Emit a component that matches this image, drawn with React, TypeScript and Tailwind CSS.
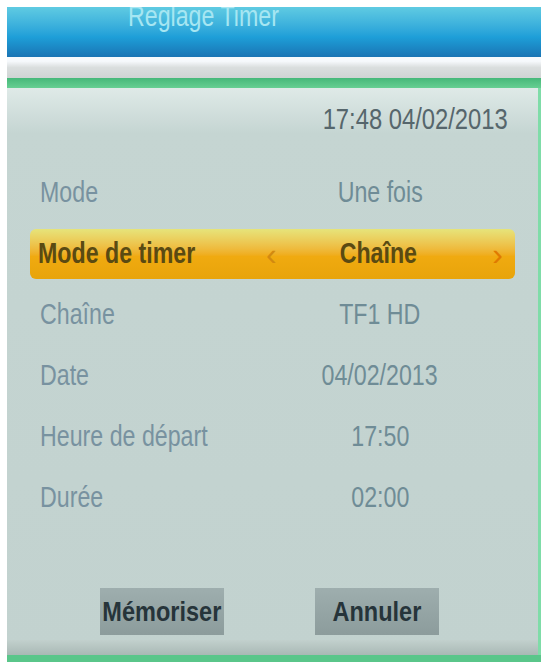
import React from 'react';

const font = "font-['Liberation_Sans',Arial,sans-serif]";

interface RowProps {
  label: string;
  value: string;
}

// the box font is a narrow one, so text is squeezed horizontally
const Row: React.FC<RowProps> = ({ label, value }) => (
  <div className="flex h-[50px] items-center pl-[33px]">
    <span className="w-[250px] whitespace-nowrap text-[29px] text-[#7892a0]">
      <span className="inline-block origin-left scale-x-[0.8]">{label}</span>
    </span>
    <span className="w-[180px] whitespace-nowrap text-center text-[29px] text-[#6f8c96]">
      <span className="inline-block scale-x-[0.8]">{value}</span>
    </span>
  </div>
);

export default function App() {
  return (
    <div className={`flex h-[662px] w-[546px] flex-col bg-white pl-[7px] pr-[5px] pt-[7px] ${font}`}>
      {/* title bar */}
      <div className="h-[50px] overflow-hidden bg-gradient-to-b from-[#5fcbe2] via-[#1e9fd8] via-60% to-[#1a74b4]">
        <div className="-mt-[11px] whitespace-nowrap pl-[121px] text-[29px] leading-[40px] text-[#a6e6f2]">
          <span className="inline-block origin-left scale-x-[0.8]">Reglage Timer</span>
        </div>
      </div>
      <div className="h-[21px] bg-gradient-to-b from-[#f6f9fc] from-20% via-[#dadede] to-[#cfd4d3]" />
      <div className="h-[10px] bg-gradient-to-b from-[#46b879] to-[#66cf92]" />

      {/* panel */}
      <div className="flex flex-1 flex-col border-r-[3px] border-[#7fdca8] bg-gradient-to-b from-[#dfeae8] via-[#c5d5d2] via-[8%] to-[#c2d2cf]">
        <div className="flex h-[64px] items-center justify-end whitespace-nowrap pr-[30px] text-[29px] text-[#56666c]">
          <span className="inline-block origin-right scale-x-[0.82]">17:48 04/02/2013</span>
        </div>

        <div className="mt-[16px] flex flex-col gap-[11px]">
          <Row label="Mode" value="Une fois" />

          <div className="mx-[23px] flex h-[50px] items-center rounded-[6px] bg-gradient-to-b from-[#e6e47a] via-[#f0aa10] via-55% to-[#e8a40a] pl-[8px] pr-[12px] font-bold text-[#5a4a12]">
            <span className="w-[228px] whitespace-nowrap text-[29px]">
              <span className="inline-block origin-left scale-x-[0.8]">Mode de timer</span>
            </span>
            <span className="w-[30px] text-[32px] font-normal text-[#d28a10]">‹</span>
            <span className="flex-1 whitespace-nowrap pr-[22px] text-center text-[29px]">
              <span className="inline-block scale-x-[0.8]">Chaîne</span>
            </span>
            <span className="w-[20px] text-right text-[32px] font-normal text-[#e07a00]">›</span>
          </div>

          <Row label="Chaîne" value="TF1 HD" />
          <Row label="Date" value="04/02/2013" />
          <Row label="Heure de départ" value="17:50" />
          <Row label="Durée" value="02:00" />
        </div>

        <div className="mt-auto flex gap-[91px] pb-[5px] pl-[93px]">
          <div className="flex h-[47px] w-[124px] items-center justify-center whitespace-nowrap bg-gradient-to-b from-[#9eaeae] to-[#8c9c9c] text-[28px] font-bold text-[#26343a]">
            <span className="inline-block scale-x-[0.84]">Mémoriser</span>
          </div>
          <div className="flex h-[47px] w-[124px] items-center justify-center whitespace-nowrap bg-gradient-to-b from-[#9eaeae] to-[#8c9c9c] text-[28px] font-bold text-[#26343a]">
            <span className="inline-block scale-x-[0.84]">Annuler</span>
          </div>
        </div>
        <div className="h-[15px] bg-gradient-to-b from-[#c2d0cd] to-[#a9b9b5]" />
      </div>
      <div className="h-[7px] bg-[#5ac68a]" />
    </div>
  );
}
